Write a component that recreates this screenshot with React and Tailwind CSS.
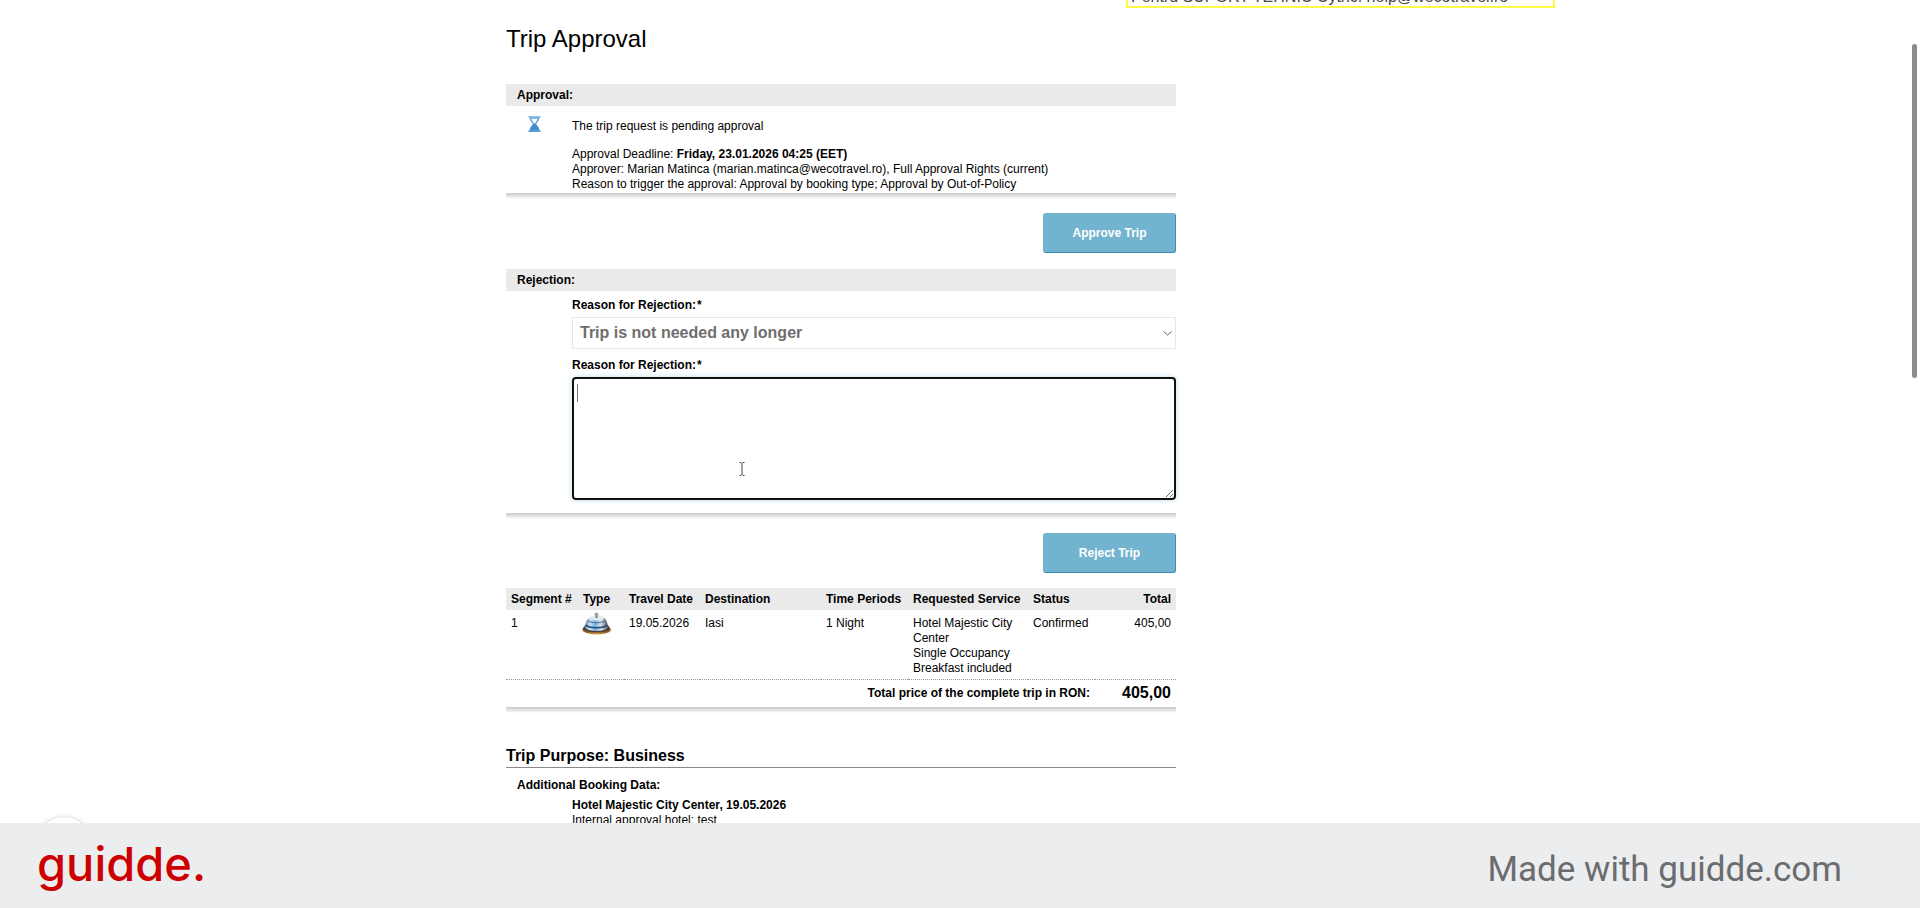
import React, { useState } from "react";

const rejectionReasons = [
  "Trip is not needed any longer",
  "Trip is too expensive",
  "Other reason",
];

const segments = [
  {
    id: 1,
    date: "19.05.2026",
    destination: "Iasi",
    period: "1 Night",
    service: ["Hotel Majestic City Center", "Single Occupancy", "Breakfast included"],
    status: "Confirmed",
    total: "405,00",
  },
];

const HourglassIcon = () => (
  <svg width="14" height="16" viewBox="0 0 14 16" aria-hidden="true">
    <path d="M2.5 2C2.5 5.500 5.500 6.500 5.500 8S2.500 10.500 2.500 14h8c0-3.500-3-4.500-3-6s3-2.500 3-6z" fill="#fff" stroke="#5b9bd8" strokeWidth="1.500" />
    <path d="M4 4.500h5L6.500 7.500z" fill="#fff" />
    <path d="M6.500 7l1.500 2.500 2.500 2.500V15h-8v-3L5 9.500z" fill="#4189cd" />
    <path d="M0.500 0h12v2h-12z" fill="#86b9e6" />
    <path d="M0.500 14h12v2h-12z" fill="#5b9bd8" />
  </svg>
);

const BellIcon = () => (
  <svg width="30" height="24" viewBox="0 0 30 24" role="img" aria-label="Hotel">
    <defs>
      <linearGradient id="dome" x1="0" x2="1">
        <stop offset="0" stopColor="#5f7f9f" />
        <stop offset="0.2" stopColor="#cfe0ee" />
        <stop offset="0.45" stopColor="#6fb0e2" />
        <stop offset="0.7" stopColor="#dde2e8" />
        <stop offset="1" stopColor="#4a5566" />
      </linearGradient>
      <linearGradient id="wood" x1="0" x2="1">
        <stop offset="0" stopColor="#7a4a1e" />
        <stop offset="0.5" stopColor="#d99b3c" />
        <stop offset="1" stopColor="#6b4423" />
      </linearGradient>
    </defs>
    <ellipse cx="16.500" cy="18.500" rx="13.500" ry="4" fill="#000" opacity="0.1" />
    <ellipse cx="14.500" cy="17.500" rx="14" ry="5" fill="url(#wood)" />
    <ellipse cx="14.500" cy="16" rx="13" ry="4.500" fill="#4b3b30" />
    <ellipse cx="14.500" cy="14.500" rx="12" ry="4.500" fill="url(#dome)" />
    <path d="M3.500 12.500C4 9 6 3.500 14.500 3.500S25 9 25.500 12.500c-2 4-20 4-22 0z" fill="url(#dome)" />
    <path d="M3.500 13c3 3.500 19 3.500 22 0" fill="none" stroke="#27466f" strokeWidth="1.500" />
    <path d="M5.500 8.500c3 3 15 3 18 0" fill="none" stroke="#4f6f92" />
    <ellipse cx="14.500" cy="6" rx="7.500" ry="2.500" fill="#e6eaef" />
    <rect x="13.500" y="1" width="2" height="5" fill="#77828e" />
    <ellipse cx="14.500" cy="2" rx="2" ry="1.500" fill="#9aa6b2" />
  </svg>
);

const ShadowLine = () => (
  <div className="h-[6px] bg-linear-to-b from-[#c9c9c9] to-white" />
);

const SectionBar = ({ children }) => (
  <h2 className="h-[22px] bg-[#eaeaea] pl-[11px] font-bold leading-[23px]">{children}</h2>
);

const FieldLabel = ({ htmlFor, children }) => (
  <label htmlFor={htmlFor} className="font-bold leading-4">
    {children}
    <span className="pl-px">*</span>
  </label>
);

const ActionButton = ({ children }) => (
  <div className="flex justify-end">
    <button
      type="button"
      className="h-10 w-[133px] rounded-[3px] border border-[#72b4d0] border-r-[#3f8fb4] border-b-[#3f8fb4] bg-[#72b4d0] font-bold text-white"
    >
      {children}
    </button>
  </div>
);

const ApprovalSection = () => (
  <section>
    <SectionBar>Approval:</SectionBar>
    <div className="flex pt-[10px] pb-px">
      <div className="w-[66px] shrink-0 pl-[22px]">
        <HourglassIcon />
      </div>
      <div className="leading-[15px]">
        <p className="pt-[3px] pb-[13px]">The trip request is pending approval</p>
        <p>
          Approval Deadline: <b>Friday, 23.01.2026 04:25 (EET)</b>
        </p>
        <p>Approver: Marian Matinca (marian.matinca@wecotravel.ro), Full Approval Rights (current)</p>
        <p>Reason to trigger the approval: Approval by booking type; Approval by Out-of-Policy</p>
      </div>
    </div>
    <ShadowLine />
  </section>
);

const RejectionSection = () => {
  const [reason, setReason] = useState(rejectionReasons[0]);
  const [comment, setComment] = useState("");

  return (
    <section>
      <SectionBar>Rejection:</SectionBar>
      <div className="flex flex-col pt-[6px] pb-[13px] pl-[66px]">
        <FieldLabel htmlFor="reason">Reason for Rejection:</FieldLabel>
        <div className="relative mt-1">
          <select
            id="reason"
            value={reason}
            onChange={(e) => setReason(e.target.value)}
            className="h-8 w-full appearance-none border border-[#e6e8ec] bg-white pl-[7px] text-[16px] font-bold text-[#6e6e6e]"
          >
            {rejectionReasons.map((item) => (
              <option key={item}>{item}</option>
            ))}
          </select>
          <svg
            className="pointer-events-none absolute top-[14px] right-1"
            width="9"
            height="5"
            viewBox="0 0 9 5"
            fill="none"
            stroke="#666"
            aria-hidden="true"
          >
            <path d="M0.500 0.500l4 3.500 4-3.500" />
          </svg>
        </div>
        <div className="mt-2 flex flex-col">
          <FieldLabel htmlFor="comment">Reason for Rejection:</FieldLabel>
        </div>
        <div className="relative mt-1 flex">
          <textarea
            id="comment"
            value={comment}
            onChange={(e) => setComment(e.target.value)}
            className="h-[123px] w-full resize rounded-[4px] border-2 border-[#111] bg-white px-1 py-1 text-[16px] shadow-[0_0_5px_#b5dbe8] outline-none"
          />
          {/* text caret and mouse pointer */}
          <span className="absolute top-[7px] left-[5px] h-[18px] w-px bg-[#777]" />
          <svg
            className="absolute top-[85px] left-[167px]"
            width="6"
            height="14"
            viewBox="0 0 6 14"
            fill="none"
            stroke="#444"
            aria-hidden="true"
          >
            <path d="M0.500 0.500H2L3 1.500 4 0.500h1.500M3 1.500v11M0.500 13.500H2L3 12.500l1 1h1.500" />
          </svg>
        </div>
      </div>
      <ShadowLine />
    </section>
  );
};

const SegmentsTable = () => (
  <section>
    <table className="w-full table-fixed text-left">
      <colgroup>
        <col className="w-[72px]" />
        <col className="w-[46px]" />
        <col className="w-[76px]" />
        <col />
        <col className="w-[87px]" />
        <col className="w-[120px]" />
        <col className="w-[67px]" />
        <col className="w-[81px]" />
      </colgroup>
      <thead>
        <tr className="h-[22px] bg-[#eaeaea] whitespace-nowrap">
          <th className="pl-[5px]">Segment #</th>
          <th className="pl-[5px]">Type</th>
          <th className="pl-[5px]">Travel Date</th>
          <th className="pl-[5px]">Destination</th>
          <th className="pl-[5px]">Time Periods</th>
          <th className="pl-[5px]">Requested Service</th>
          <th className="pl-[5px]">Status</th>
          <th className="pr-[5px] text-right">Total</th>
        </tr>
      </thead>
      <tbody>
        {segments.map((segment) => (
          <tr key={segment.id} className="border-b border-dotted border-[#999] align-top leading-[15px]">
            <td className="pt-[6px] pl-[5px]">{segment.id}</td>
            <td className="pt-[2px] pl-1">
              <BellIcon />
            </td>
            <td className="pt-[6px] pl-[5px]">{segment.date}</td>
            <td className="pt-[6px] pl-[5px]">{segment.destination}</td>
            <td className="pt-[6px] pl-[5px]">{segment.period}</td>
            <td className="pt-[6px] pb-[3px] pl-[5px]">
              {segment.service.map((line) => (
                <p key={line}>{line}</p>
              ))}
            </td>
            <td className="pt-[6px] pl-[5px]">{segment.status}</td>
            <td className="pt-[6px] pr-[5px] text-right">{segment.total}</td>
          </tr>
        ))}
      </tbody>
      <tfoot>
        <tr className="h-[27px] text-right font-bold">
          <td colSpan={7} className="pr-[5px]">
            Total price of the complete trip in RON:
          </td>
          <td className="pr-[5px] text-[16px]">405,00</td>
        </tr>
      </tfoot>
    </table>
    <ShadowLine />
  </section>
);

const TripPurpose = () => (
  <section>
    <h2 className="border-b border-[#8a8a8a] pb-px text-[16px] leading-5 font-bold">
      Trip Purpose: Business
    </h2>
    <h3 className="pt-[10px] pl-[11px] leading-[15px] font-bold">Additional Booking Data:</h3>
    <div className="pt-[5px] pl-[66px] leading-[15px]">
      <p className="font-bold">Hotel Majestic City Center, 19.05.2026</p>
      <p>Internal approval hotel: test</p>
    </div>
  </section>
);

const App = () => {
  return (
    <div className="flex h-screen flex-col overflow-hidden bg-white font-['Liberation_Sans',Arial,sans-serif] text-[12px] text-black">
      <main className="relative min-h-0 flex-1 overflow-hidden pr-[238px]">
        <div className="absolute -top-[14px] right-[365px] w-[429px] border-2 border-[#fbfb4a] px-[3px] text-[16px] leading-[18px] whitespace-nowrap text-[#444]">
          Pentru SUPORT TEHNIC Cytric: help@wecotravel.ro
        </div>

        <div className="mx-auto w-full max-w-[670px]">
          <h1 className="pt-[25px] pb-[31px] text-[24px] leading-7">Trip Approval</h1>
          <ApprovalSection />
          <div className="pt-[14px] pb-4">
            <ActionButton>Approve Trip</ActionButton>
          </div>
          <RejectionSection />
          <div className="pt-[14px] pb-[15px]">
            <ActionButton>Reject Trip</ActionButton>
          </div>
          <SegmentsTable />
          <div className="pt-[33px]">
            <TripPurpose />
          </div>
        </div>

        {/* floating help button, mostly under the footer */}
        <button
          type="button"
          aria-label="Help"
          className="absolute -bottom-12 left-[37px] size-[54px] rounded-full bg-white shadow-[0_0_5px_#ccc]"
        />
        <div className="absolute top-11 right-[3px] h-[334px] w-[5px] rounded-full bg-[#8a8b8b]" />
      </main>

      <footer className="flex h-[85px] shrink-0 items-center justify-between bg-[#ecedef] pr-[78px] pl-[37px]">
        <a href="#guidde" className="pb-1 font-['Inter',sans-serif] text-[47px] leading-none font-medium text-[#cc0000]">
          guidde.
        </a>
        <p className="pt-2 font-['Roboto',sans-serif] text-[35px] leading-none text-[#6a6c6e]">
          Made with guidde.com
        </p>
      </footer>
    </div>
  );
};

export default App;
